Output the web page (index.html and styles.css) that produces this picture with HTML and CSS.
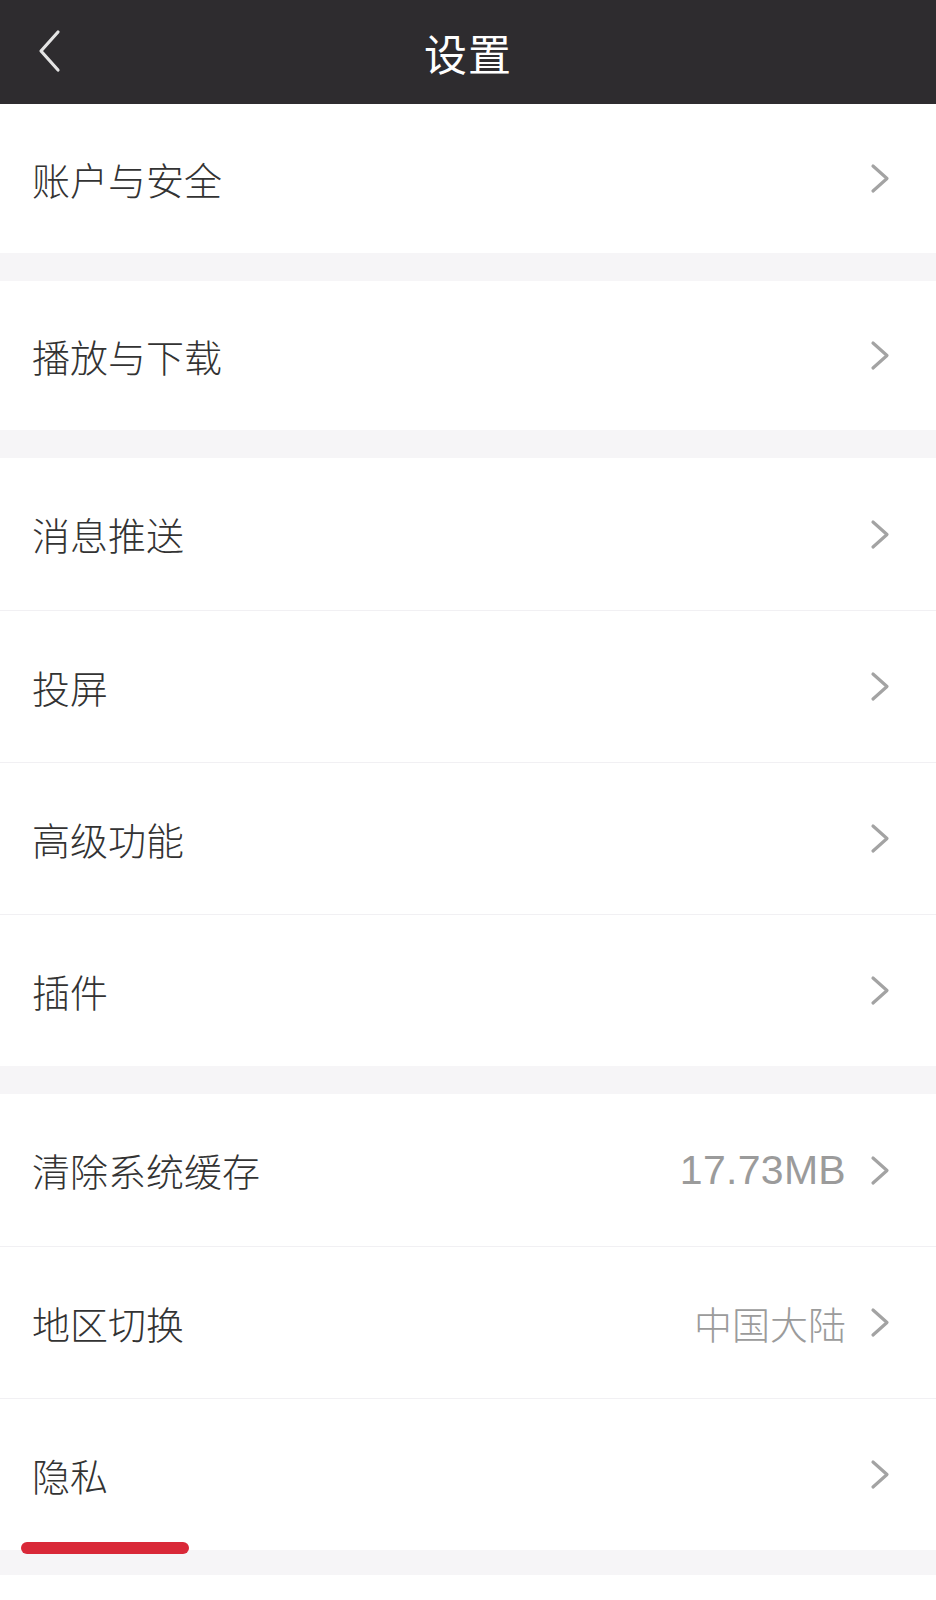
FILE: index.html
```html
<!DOCTYPE html>
<html lang="zh-CN">
<head>
<meta charset="utf-8">
<title>设置</title>
<link rel="stylesheet" href="styles.css">
</head>
<body>
<div class="page">
  <header class="topbar">
    <span class="back">
      <svg width="24" height="44" viewBox="0 0 24 44"><path d="M21 3 L4 22 L21 41" fill="none" stroke="#e4e4e4" stroke-width="3.2" stroke-linecap="round" stroke-linejoin="round"/></svg>
    </span>
    <h1 class="title">设置</h1>
  </header>

  <section class="group single">
    <div class="row"><span class="label">账户与安全</span><span class="right"><svg class="chev" width="20" height="31" viewBox="0 0 20 31"><path d="M3 3 L17 15.5 L3 28" fill="none" stroke="#a3a3a3" stroke-width="3.2" stroke-linecap="round" stroke-linejoin="round"/></svg></span></div>
  </section>
  <div class="gap"></div>
  <section class="group single">
    <div class="row"><span class="label">播放与下载</span><span class="right"><svg class="chev" width="20" height="31" viewBox="0 0 20 31"><path d="M3 3 L17 15.5 L3 28" fill="none" stroke="#a3a3a3" stroke-width="3.2" stroke-linecap="round" stroke-linejoin="round"/></svg></span></div>
  </section>
  <div class="gap"></div>
  <section class="group">
    <div class="row"><span class="label">消息推送</span><span class="right"><svg class="chev" width="20" height="31" viewBox="0 0 20 31"><path d="M3 3 L17 15.5 L3 28" fill="none" stroke="#a3a3a3" stroke-width="3.2" stroke-linecap="round" stroke-linejoin="round"/></svg></span></div>
    <div class="row"><span class="label">投屏</span><span class="right"><svg class="chev" width="20" height="31" viewBox="0 0 20 31"><path d="M3 3 L17 15.5 L3 28" fill="none" stroke="#a3a3a3" stroke-width="3.2" stroke-linecap="round" stroke-linejoin="round"/></svg></span></div>
    <div class="row"><span class="label">高级功能</span><span class="right"><svg class="chev" width="20" height="31" viewBox="0 0 20 31"><path d="M3 3 L17 15.5 L3 28" fill="none" stroke="#a3a3a3" stroke-width="3.2" stroke-linecap="round" stroke-linejoin="round"/></svg></span></div>
    <div class="row"><span class="label">插件</span><span class="right"><svg class="chev" width="20" height="31" viewBox="0 0 20 31"><path d="M3 3 L17 15.5 L3 28" fill="none" stroke="#a3a3a3" stroke-width="3.2" stroke-linecap="round" stroke-linejoin="round"/></svg></span></div>
  </section>
  <div class="gap"></div>
  <section class="group">
    <div class="row"><span class="label">清除系统缓存</span><span class="right"><span class="value num">17.73MB</span><svg class="chev" width="20" height="31" viewBox="0 0 20 31"><path d="M3 3 L17 15.5 L3 28" fill="none" stroke="#a3a3a3" stroke-width="3.2" stroke-linecap="round" stroke-linejoin="round"/></svg></span></div>
    <div class="row"><span class="label">地区切换</span><span class="right"><span class="value">中国大陆</span><svg class="chev" width="20" height="31" viewBox="0 0 20 31"><path d="M3 3 L17 15.5 L3 28" fill="none" stroke="#a3a3a3" stroke-width="3.2" stroke-linecap="round" stroke-linejoin="round"/></svg></span></div>
    <div class="row"><span class="label">隐私</span><span class="right"><svg class="chev" width="20" height="31" viewBox="0 0 20 31"><path d="M3 3 L17 15.5 L3 28" fill="none" stroke="#a3a3a3" stroke-width="3.2" stroke-linecap="round" stroke-linejoin="round"/></svg></span></div>
    <span class="mark"></span>
  </section>
  <div class="gap gap-last"></div>
</div>
</body>
</html>
```

FILE: styles.css
```css
* { box-sizing: border-box; }
html, body { margin: 0; padding: 0; background: #ffffff; }
body {
  font-family: "Noto Sans CJK SC", "Noto Sans", "Liberation Sans", sans-serif;
  color: #333333;
}
.page { width: 936px; }

.topbar {
  height: 104px;
  background: #2e2c2f;
  display: flex;
  align-items: center;
  justify-content: center;
  position: relative;
}
.back {
  position: absolute;
  left: 37px;
  top: 29px;
  display: block;
  line-height: 0;
}
.title {
  margin: 0;
  color: #ffffff;
  font-size: 43px;
  font-weight: 400;
  line-height: 1;
  letter-spacing: 1px;
}

.group { background: #ffffff; position: relative; }
.row {
  height: 152px;
  display: flex;
  align-items: center;
  justify-content: space-between;
  padding: 0 46px 0 32px;
  border-top: 1px solid #f1f0f3;
}
.row:first-child { border-top: none; }
.single .row { height: 149px; }

.label {
  font-size: 38px;
  font-weight: 300;
  line-height: 1;
  color: #333333;
}
.right {
  display: flex;
  align-items: center;
  gap: 24px;
}
.value {
  font-size: 38px;
  font-weight: 300;
  line-height: 1;
  color: #9b9b9b;
}
.value.num {
  font-family: "Liberation Sans", "Noto Sans", sans-serif;
  font-size: 41px;
  font-weight: 400;
  letter-spacing: 0.3px;
}
.chev { display: block; }

.gap { height: 28px; background: #f6f5f7; }
.gap-last { height: 25px; }

.mark {
  position: absolute;
  left: 21px;
  bottom: -4px;
  width: 168px;
  height: 12px;
  border-radius: 6px;
  background: #d92838;
}
```
